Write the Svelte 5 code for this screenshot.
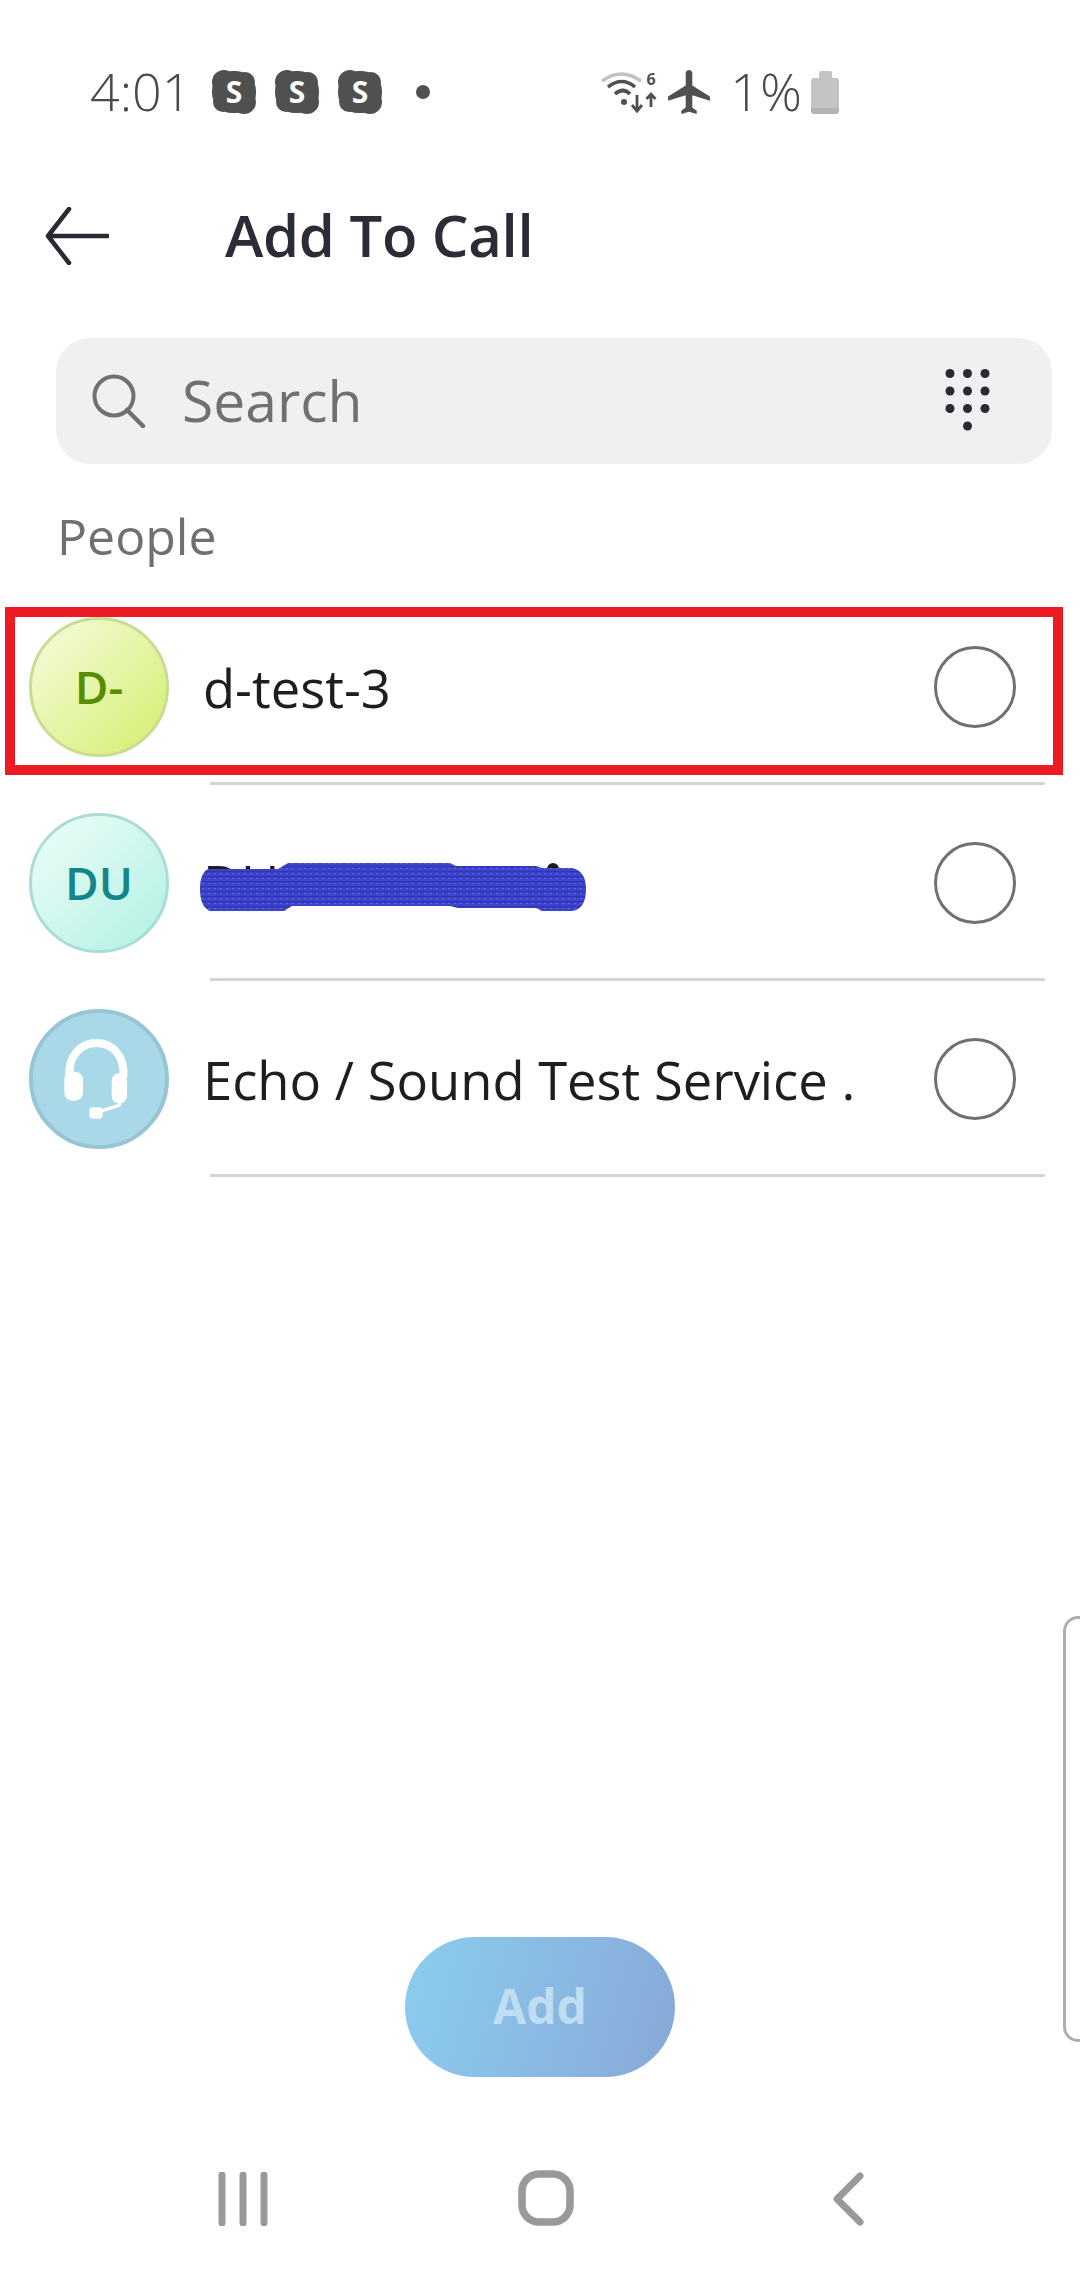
<script lang="ts">
	interface Contact {
		initials: string;
		name: string;
		tone: 'lime' | 'mint' | 'echo';
		hidden?: boolean;
	}

	const contacts: Contact[] = [
		{ initials: 'D-', name: 'd-test-3', tone: 'lime' },
		{ initials: 'DU', name: 'DU', tone: 'mint', hidden: true },
		{ initials: '', name: 'Echo / Sound Test Service .', tone: 'echo' }
	];

	const skypeCount = [0, 1, 2];
	const dialDots = [
		[0, 0], [17.5, 0], [35, 0],
		[0, 17.5], [17.5, 17.5], [35, 17.5],
		[0, 35], [17.5, 35], [35, 35],
		[17.5, 52.5]
	];
</script>

<div class="screen">
	<div class="status">
		<div class="status-left">
			<span class="clock">4:01</span>
			<div class="skypes">
				{#each skypeCount as i (i)}
					<svg class="skype" viewBox="0 0 46 44">
						<rect x="1" y="1" width="44" height="42" rx="20" fill="#505050" />
						<circle cx="13" cy="12" r="12" fill="#505050" />
						<circle cx="33" cy="32" r="12" fill="#505050" />
						<circle cx="34" cy="12" r="10" fill="#505050" />
						<circle cx="12" cy="32" r="10" fill="#505050" />
						<text x="23" y="33" text-anchor="middle" class="skype-s">S</text>
					</svg>
				{/each}
			</div>
			<span class="notif-dot"></span>
		</div>
		<div class="status-right">
			<svg class="wifi" viewBox="20 14 60 56">
				<path d="M24 31 Q43 17 63 31" fill="none" stroke="#c2c2c2" stroke-width="3.4" />
				<path d="M30 37 Q44 26 57 37" fill="none" stroke="#505050" stroke-width="3.6" />
				<path d="M37 44 Q45 37 52 44" fill="none" stroke="#505050" stroke-width="3.6" />
				<circle cx="46" cy="52" r="3" fill="#505050" />
				<path d="M59 45 V60 M54 55 L59 61 L64 55" fill="none" stroke="#505050" stroke-width="2.8" />
				<path d="M73 57 V45 M68.500 49 L73 44 L77.500 49" fill="none" stroke="#505050" stroke-width="2.8" />
				<text x="73" y="35" text-anchor="middle" class="wifi-six">6</text>
			</svg>
			<svg class="plane" viewBox="2 2 19 20">
				<path d="M21 16v-2l-8-5V3.500c0-.83-.67-1.500-1.500-1.500S10 2.670 10 3.500V9l-8 5v2l8-2.500V19l-2 1.500V22l3.500-1 3.500 1v-1.500L13 19v-5.500l8 2.500z" fill="#505050" />
			</svg>
			<span class="battery-pct">1%</span>
			<div class="battery">
				<span class="battery-cap"></span>
				<span class="battery-body"></span>
			</div>
		</div>
	</div>

	<header class="title-bar">
		<svg class="back" viewBox="0 0 64 58">
			<path d="M63 29 H4 M24 2 L3 29 L24 56" fill="none" stroke="#282b33" stroke-width="4.500" stroke-linecap="round" stroke-linejoin="round" />
		</svg>
		<h1>Add To Call</h1>
	</header>

	<div class="search">
		<svg class="search-icon" viewBox="0 0 54 54">
			<circle cx="22" cy="22" r="19.500" fill="none" stroke="#6f7072" stroke-width="4" />
			<path d="M35 36 L51 52" stroke="#6f7072" stroke-width="4.500" stroke-linecap="round" />
		</svg>
		<span class="search-label">Search</span>
		<svg class="dial" viewBox="0 0 45 62">
			{#each dialDots as [x, y]}
				<circle cx={x + 5} cy={y + 4.500} r="4.500" fill="#282b33" />
			{/each}
		</svg>
	</div>

	<div class="section-label">People</div>

	<ul class="people">
		{#each contacts as c}
			<li class="row">
				<div class="avatar {c.tone}">
					{#if c.tone === 'echo'}
						<svg viewBox="57 57 420 420" class="headset">
							<path d="M178 262 C168 125 352 125 340 262" fill="none" stroke="#fff" stroke-width="24" />
							<rect x="163" y="245" width="56" height="87" rx="24" fill="#fff" />
							<rect x="305" y="250" width="46" height="90" rx="22" fill="#fff" />
							<path d="M338 320 L327 346 L258 368" fill="none" stroke="#fff" stroke-width="10" />
							<rect x="238" y="352" width="40" height="34" rx="12" fill="#fff" />
						</svg>
					{:else}
						{c.initials}
					{/if}
				</div>
				<div class="name">
					{c.name}
					{#if c.hidden}
						<svg class="scribble" viewBox="0 0 386 48">
							<defs>
								<pattern id="scrib" width="6" height="5" patternUnits="userSpaceOnUse">
									<rect width="6" height="5" fill="#3c44cc" />
									<rect y="3" width="6" height="1.500" fill="#2f35b4" />
									<rect x="2" y="0" width="2" height="1" fill="#6068e6" />
								</pattern>
							</defs>
							<circle cx="353" cy="6" r="6" fill="#1c1c1c" />
							<path d="M8 6 H78 L88 0 H250 L256 3 H336 L342 5 H372 Q386 8 386 26 Q386 46 372 48 H342 L336 45 H258 L250 43 H92 L84 48 H10 Q0 44 0 26 Q0 10 8 6 Z" fill="url(#scrib)" />
						</svg>
					{/if}
				</div>
				<span class="radio"></span>
			</li>
		{/each}
	</ul>

	<!-- red annotation box from the original screenshot -->
	<div class="highlight"></div>
	<div class="side-handle"></div>

	<div class="spacer"></div>

	<div class="action">
		<button class="add">Add</button>
	</div>

	<nav class="softkeys">
		<svg class="key-recent" viewBox="0 0 50 54">
			<path d="M4 3 V51 M25 3 V51 M46 3 V51" stroke="#999" stroke-width="7" stroke-linecap="round" />
		</svg>
		<svg class="key-home" viewBox="0 0 56 56">
			<rect x="4" y="4" width="48" height="48" rx="17" fill="none" stroke="#999" stroke-width="7.500" />
		</svg>
		<svg class="key-back" viewBox="0 0 32 54">
			<path d="M28 4 L5 27 L28 50" fill="none" stroke="#999" stroke-width="7" stroke-linecap="round" stroke-linejoin="round" />
		</svg>
	</nav>
</div>

<style>
	:global(body) {
		margin: 0;
		background: #fff;
	}

	.screen {
		position: relative;
		width: 1080px;
		height: 2280px;
		display: flex;
		flex-direction: column;
		overflow: hidden;
		background: #fff;
		font-family: 'Open Sans', 'Noto Sans', sans-serif;
	}

	.status {
		height: 96px;
		margin-top: 44px;
		padding: 0 241px 0 90px;
		display: flex;
		align-items: center;
		justify-content: space-between;
	}

	.status-left,
	.status-right {
		display: flex;
		align-items: center;
	}

	.clock,
	.battery-pct {
		font-size: 52px;
		font-weight: 300;
		color: #4a4a4a;
		line-height: 1;
		margin-top: -2px;
	}

	.skypes {
		display: flex;
		gap: 17px;
		margin-left: 20px;
	}

	.skype {
		width: 46px;
		height: 44px;
	}

	.skype-s {
		font-size: 30px;
		font-weight: 700;
		fill: #fff;
	}

	.notif-dot {
		width: 14px;
		height: 14px;
		border-radius: 50%;
		background: #505050;
		margin-left: 33px;
	}

	.wifi {
		width: 60px;
		height: 56px;
	}

	.wifi-six {
		font-size: 16px;
		font-weight: 700;
		fill: #505050;
	}

	.plane {
		width: 44px;
		height: 44px;
		margin-left: 9px;
	}

	.battery-pct {
		margin-left: 19px;
	}

	.battery {
		width: 28px;
		height: 43px;
		margin-left: 9px;
		display: flex;
		flex-direction: column;
		align-items: center;
	}

	.battery-cap {
		width: 13px;
		height: 7px;
		background: #c4c4c4;
		border-radius: 2px 2px 0 0;
	}

	.battery-body {
		flex: 1;
		width: 100%;
		box-sizing: border-box;
		background: #c4c4c4;
		border-bottom: 6px solid #b4b4b4;
		border-radius: 3px;
	}

	.title-bar {
		height: 192px;
		box-sizing: border-box;
		display: flex;
		align-items: center;
		padding-left: 45px;
	}

	.back {
		width: 64px;
		height: 58px;
	}

	h1 {
		margin: -3px 0 0 116px;
		font-size: 58px;
		font-weight: 600;
		color: #2a2c36;
		letter-spacing: -0.3px;
	}

	.search {
		height: 126px;
		margin: 6px 28px 0 56px;
		padding: 0 62px 0 36px;
		display: flex;
		align-items: center;
		background: #f0f0f1;
		border-radius: 34px;
	}

	.search-icon {
		width: 54px;
		height: 54px;
		flex: none;
	}

	.search-label {
		flex: 1;
		margin: -2px 0 0 36px;
		font-size: 57px;
		color: #707070;
	}

	.dial {
		width: 45px;
		height: 62px;
		margin-top: -2px;
	}

	.section-label {
		height: 125px;
		box-sizing: border-box;
		padding: 40px 0 0 57px;
		font-size: 50px;
		line-height: 1.3;
		color: #707070;
	}

	.people {
		list-style: none;
		margin: 0;
		padding: 0;
	}

	.row {
		position: relative;
		height: 196px;
		box-sizing: border-box;
		padding: 0 64px 0 29px;
		display: flex;
		align-items: center;
	}

	.row::after {
		content: '';
		position: absolute;
		left: 210px;
		right: 35px;
		bottom: 0;
		height: 3px;
		background: #d2d4d8;
	}

	.avatar {
		width: 140px;
		height: 140px;
		flex: none;
		box-sizing: border-box;
		padding-bottom: 3px;
		border-radius: 50%;
		display: flex;
		align-items: center;
		justify-content: center;
		font-size: 46px;
		font-weight: 600;
	}

	.avatar.lime {
		background: linear-gradient(135deg, #f6fbe0, #d3ef6c);
		border: 3px solid #c9dd92;
		color: #5a8c00;
	}

	.avatar.mint {
		background: linear-gradient(135deg, #effdf9, #b0f1e3);
		border: 3px solid #acdcd6;
		color: #14858a;
	}

	.avatar.echo {
		padding-bottom: 0;
		background: #a9d9e8;
		border: 4px solid #98c5d4;
	}

	.headset {
		width: 140px;
		height: 140px;
		flex: none;
	}

	.name {
		position: relative;
		flex: 1;
		margin-left: 34px;
		font-size: 52.500px;
		color: #1e1e1e;
	}

	.scribble {
		position: absolute;
		left: -3px;
		top: 15px;
		width: 386px;
		height: 48px;
	}

	.radio {
		width: 82px;
		height: 82px;
		flex: none;
		box-sizing: border-box;
		border: 3px solid #707070;
		border-radius: 50%;
	}

	.highlight {
		position: absolute;
		left: 5px;
		top: 607px;
		width: 1058px;
		height: 168px;
		box-sizing: border-box;
		border: 10px solid #ed1c24;
	}

	.side-handle {
		position: absolute;
		left: 1063px;
		top: 1616px;
		width: 30px;
		height: 426px;
		box-sizing: border-box;
		border: 3px solid #aeaeae;
		border-radius: 18px;
	}

	.spacer {
		flex: 1;
	}

	.action {
		display: flex;
		justify-content: center;
	}

	.add {
		width: 270px;
		height: 140px;
		padding: 0 0 3px;
		border: 0;
		border-radius: 70px;
		background: linear-gradient(105deg, #8bcdef, #88a8d7);
		color: #bfdef2;
		font-family: inherit;
		font-size: 48px;
		font-weight: 700;
	}

	.softkeys {
		height: 203px;
		box-sizing: border-box;
		padding: 95px 216px 0 218px;
		display: flex;
		justify-content: space-between;
		align-items: flex-start;
	}

	.key-recent {
		width: 50px;
		height: 54px;
	}

	.key-home {
		width: 56px;
		height: 56px;
		margin: -2px 9px 0 0;
	}

	.key-back {
		width: 32px;
		height: 54px;
	}
</style>
